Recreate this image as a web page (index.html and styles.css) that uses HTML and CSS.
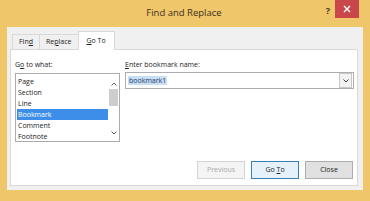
FILE: index.html
```html
<!DOCTYPE html>
<html lang="en">
<head>
    <meta charset="UTF-8">
    <meta name="viewport" content="width=device-width, initial-scale=1.0">
    <title>Find and Replace</title>
    <link rel="stylesheet" href="styles.css">
</head>
<body>

<div class="window">
    <!-- Title bar -->
    <div class="titlebar">
        <div class="title">Find and Replace</div>
        <div class="help">?</div>
        <div class="close">
            <svg width="8" height="8" viewBox="0 0 8 8"><path d="M1 1L7 7M7 1L1 7" stroke="#fff" stroke-width="1.4"/></svg>
        </div>
    </div>

    <div class="client">
        <!-- Tabs -->
        <div class="tabs">
            <div class="tab">Fin<u>d</u></div>
            <div class="tab">Re<u>p</u>lace</div>
            <div class="tab active"><u>G</u>o To</div>
        </div>

        <div class="panel">
            <div class="fields">
                <div class="col-left">
                    <div class="label">G<u>o</u> to what:</div>
                    <div class="listbox">
                        <div class="items">
                            <div class="item">Page</div>
                            <div class="item">Section</div>
                            <div class="item">Line</div>
                            <div class="item selected">Bookmark</div>
                            <div class="item">Comment</div>
                            <div class="item">Footnote</div>
                        </div>
                        <div class="scrollbar">
                            <div class="arrow">
                                <svg width="6" height="4" viewBox="0 0 6 4"><path d="M0.5 3.5L3 1L5.5 3.5" fill="none" stroke="#606060" stroke-width="1"/></svg>
                            </div>
                            <div class="thumb"></div>
                            <div class="track"></div>
                            <div class="arrow">
                                <svg width="6" height="4" viewBox="0 0 6 4"><path d="M0.5 0.5L3 3L5.5 0.5" fill="none" stroke="#606060" stroke-width="1"/></svg>
                            </div>
                        </div>
                    </div>
                </div>
                <div class="col-right">
                    <div class="label"><u>E</u>nter bookmark name:</div>
                    <div class="combo">
                        <div class="combo-text"><span class="sel">bookmark1</span></div>
                        <div class="combo-btn">
                            <svg width="6" height="4" viewBox="0 0 6 4"><path d="M0.5 0.5L3 3L5.5 0.5" fill="none" stroke="#404040" stroke-width="1"/></svg>
                        </div>
                    </div>
                </div>
            </div>

            <div class="buttons">
                <div class="btn disabled">Previous</div>
                <div class="btn default">Go <u>T</u>o</div>
                <div class="btn">Close</div>
            </div>
        </div>
    </div>
</div>

</body>
</html>
```

FILE: styles.css
```css
body { margin: 0; font-family: "Open Sans", "Noto Sans", sans-serif; }
.window { width: 370px; height: 201px; background-color: #efc66a; display: flex; flex-direction: column; box-sizing: border-box; padding: 0 7px 11px 7px; }

.titlebar { height: 27px; display: flex; align-items: flex-start; position: relative; }
.title { flex: 1; text-align: center; font-size: 9.5px; color: #3a3020; padding-top: 6px; padding-left: 40px; }
.help { width: 14px; font-size: 9px; font-weight: bold; color: #4a3a20; padding-top: 4px; text-align: center; }
.close { width: 24px; height: 18px; background-color: #c9474a; display: flex; align-items: center; justify-content: center; margin-right: 4px; }

.client { flex: 1; background-color: #f0f0f0; display: flex; flex-direction: column; padding: 3px 5px 4px 3px; }

.tabs { display: flex; align-items: flex-end; height: 19px; padding-left: 2px; }
.tab { font-size: 7px; color: #222; background-color: #f0f0f0; border: 1px solid #d9d9d9; border-bottom: none; height: 14px; line-height: 14px; padding: 0 6px; margin-right: -1px; }
.tab.active { background-color: #fff; height: 18px; line-height: 18px; margin-bottom: -1px; position: relative; z-index: 1; padding: 0 8px; }

.panel { flex: 1; background-color: #fff; border: 1px solid #d9d9d9; display: flex; flex-direction: column; padding: 10px 3px 6px 4px; }

.fields { display: flex; gap: 5px; }
.label { font-size: 7px; color: #222; height: 13px; line-height: 9px; }
.col-left { width: 105px; }
.col-right { flex: 1; }

.listbox { height: 69px; border: 1px solid #ababab; box-sizing: border-box; display: flex; }
.items { flex: 1; padding: 2px 0 0 1px; }
.item { font-size: 7px; height: 11px; line-height: 11px; color: #222; padding-left: 1px; }
.item.selected { background-color: #3d8ee9; color: #fff; }
.scrollbar { width: 11px; display: flex; flex-direction: column; align-items: center; padding: 6px 0 4px 0; }
.arrow { height: 8px; display: flex; align-items: center; }
.thumb { width: 9px; height: 17px; background-color: #cdcdcd; margin-top: 1px; }
.track { flex: 1; }

.combo { height: 17px; border: 1px solid #abadb3; box-sizing: border-box; display: flex; align-items: center; margin-top: -1px; }
.combo-text { flex: 1; padding-left: 2px; font-size: 7px; }
.sel { background-color: #c9ddf3; color: #1c3c70; padding: 0 1px; }
.combo-btn { width: 11px; height: 13px; border: 1px solid #c8c8c8; background-color: #f2f2f2; display: flex; align-items: center; justify-content: center; margin-right: 1px; }

.buttons { margin-top: auto; display: flex; justify-content: flex-end; gap: 6px; padding-right: 1px; }
.btn { width: 46px; height: 16px; line-height: 16px; text-align: center; font-size: 7px; color: #222; background-color: #e1e1e1; border: 1px solid #adadad; }
.btn.disabled { color: #a8a8a8; background-color: #f4f4f4; border-color: #d4d4d4; }
.btn.default { background-color: #e5f1fb; border-color: #3c7fb1; }
```
